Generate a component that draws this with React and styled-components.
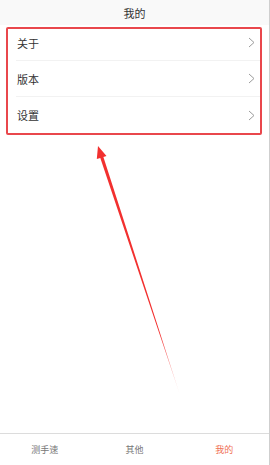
import styled, { createGlobalStyle } from "styled-components";

const GlobalStyle = createGlobalStyle`
  html, body {
    margin: 0;
    padding: 0;
    background: #fff;
  }
  body {
    font-family: "Noto Sans CJK SC", "Noto Sans", sans-serif;
  }
`;

const Page = styled.div`
  position: relative;
  width: 270px;
  height: 465px;
  box-sizing: border-box;
  border-right: 1px solid #cfcfcf;
  display: flex;
  flex-direction: column;
  background: #fff;
  overflow: hidden;
`;

const Header = styled.header`
  height: 25px;
  display: flex;
  align-items: center;
  justify-content: center;
  background: #f9f9f9;
  font-size: 11px;
  color: #333;
`;

const Content = styled.main`
  flex: 1;
`;

const Menu = styled.ul`
  list-style: none;
  margin: 0 8px 0 16px;
  padding: 0;
`;

const Row = styled.li`
  box-sizing: border-box;
  height: 36px;
  display: flex;
  align-items: center;
  justify-content: space-between;
  padding: 0 6px 0 1px;
  font-size: 11px;
  color: #333;
  border-bottom: ${(props) => (props.last ? "none" : "1px solid #f2f2f2")};
`;

const Chevron = () => (
  <svg width="7" height="11" viewBox="0 0 7 11">
    <path d="M1 1 L6 5.5 L1 10" fill="none" stroke="#9c9c9c" strokeWidth="1" />
  </svg>
);

const Highlight = styled.div`
  position: absolute;
  left: 6px;
  top: 27px;
  width: 256px;
  height: 108px;
  box-sizing: border-box;
  border: 2px solid #e9474c;
  border-radius: 2px;
  pointer-events: none;
`;

const TabBar = styled.nav`
  height: 31px;
  display: grid;
  grid-template-columns: repeat(3, 1fr);
  border-top: 1px solid #dcdcdc;
  background: #fff;
`;

const Tab = styled.div`
  display: flex;
  align-items: center;
  justify-content: center;
  font-size: 9px;
  color: ${(props) => (props.active ? "#f06f55" : "#777")};
`;

const Arrow = styled.svg`
  position: absolute;
  left: 0;
  top: 0;
  pointer-events: none;
`;

const items = ["关于", "版本", "设置"];
const tabs = ["测手速", "其他", "我的"];

function App() {
  return (
    <>
      <GlobalStyle />
      <Page>
        <Header>我的</Header>
        <Content>
          <Menu>
            {items.map((item, index) => (
              <Row key={item} last={index === items.length - 1}>
                <span>{item}</span>
                <Chevron />
              </Row>
            ))}
          </Menu>
        </Content>
        <TabBar>
          {tabs.map((tab, index) => (
            <Tab key={tab} active={index === 2}>
              {tab}
            </Tab>
          ))}
        </TabBar>
        {/* annotation */}
        <Highlight />
        <Arrow width="270" height="465" viewBox="0 0 270 465">
          <defs>
            <linearGradient id="fade" x1="98" y1="146" x2="180" y2="395" gradientUnits="userSpaceOnUse">
              <stop offset="0" stopColor="#f2302f" />
              <stop offset="0.75" stopColor="#f2302f" />
              <stop offset="1" stopColor="#f2302f" stopOpacity="0.1" />
            </linearGradient>
          </defs>
          <polygon
            points="98,146 106.5,156 103.4,157 180,395 100.3,158 96.8,159"
            fill="url(#fade)"
          />
        </Arrow>
      </Page>
    </>
  );
}

export default App;
